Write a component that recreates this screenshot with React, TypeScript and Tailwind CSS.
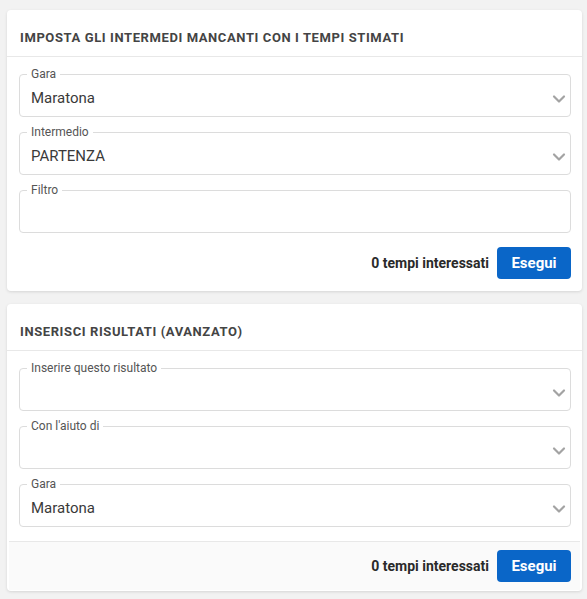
import { ChevronDown } from "lucide-react";

type FieldProps = {
  label: string;
  value?: string;
  select?: boolean;
};

const Field = ({ label, value, select = true }: FieldProps) => {
  return (
    <fieldset className="border border-[#dcdcdc] rounded-[4px] px-0 pb-0 m-0 min-w-0">
      <legend className="ml-[7px] px-[4px] text-[12px] leading-[14px] text-[#555]">{label}</legend>
      <div className="h-[35px] flex items-center justify-between pl-[11px] pr-[1px]">
        <span className="text-[15px] text-[#3a3a3a]">{value}</span>
        {select && <ChevronDown size={20} strokeWidth={2.6} className="text-[#a3a3a3]" />}
      </div>
    </fieldset>
  );
};

const Footer = () => {
  return (
    <div className="flex items-center justify-end gap-2">
      <span className="text-[14px] font-bold text-[#2a2a2a]">0 tempi interessati</span>
      <button className="w-[74px] h-[32px] rounded-[4px] bg-[#0a66c8] text-white text-[15px] font-bold">
        Esegui
      </button>
    </div>
  );
};

export default function App() {
  return (
    <div
      className="min-h-[599px] bg-[#f2f2f2] pl-[7px] pr-[5px] pt-[10px] pb-[7px] flex flex-col gap-[13px]"
      style={{ fontFamily: "Roboto, 'Noto Sans', sans-serif" }}
    >
      <div className="bg-white rounded-[4px] shadow-[0_1px_3px_rgba(0,0,0,0.12)]">
        <div className="px-[13px] pt-[20px] pb-[10px] border-b border-[#e8e8e8]">
          <h2 className="text-[13px] leading-[16px] font-bold tracking-[0.6px] text-[#444]">
            IMPOSTA GLI INTERMEDI MANCANTI CON I TEMPI STIMATI
          </h2>
        </div>
        <div className="px-[12px] pr-[11px] pt-[10px] pb-[12px]">
          <div className="flex flex-col gap-[8px]">
            <Field label="Gara" value="Maratona" />
            <Field label="Intermedio" value="PARTENZA" />
            <Field label="Filtro" select={false} />
          </div>
          <div className="pt-[14px]">
            <Footer />
          </div>
        </div>
      </div>

      <div className="bg-white rounded-[4px] shadow-[0_1px_3px_rgba(0,0,0,0.12)]">
        <div className="px-[13px] pt-[20px] pb-[10px] border-b border-[#e8e8e8]">
          <h2 className="text-[13px] leading-[16px] font-bold tracking-[0.6px] text-[#444]">
            INSERISCI RISULTATI (AVANZATO)
          </h2>
        </div>
        <div className="px-[12px] pr-[11px] pt-[10px] pb-[14px] flex flex-col gap-[8px]">
          <Field label="Inserire questo risultato" />
          <Field label="Con l'aiuto di" />
          <Field label="Gara" value="Maratona" />
        </div>
        <div className="mx-[2px] mb-[1px] border-t border-[#e8e8e8] bg-[#fafafa] pl-[10px] pr-[9px] pt-[8px] pb-[8px]">
          <Footer />
        </div>
      </div>
    </div>
  );
}
